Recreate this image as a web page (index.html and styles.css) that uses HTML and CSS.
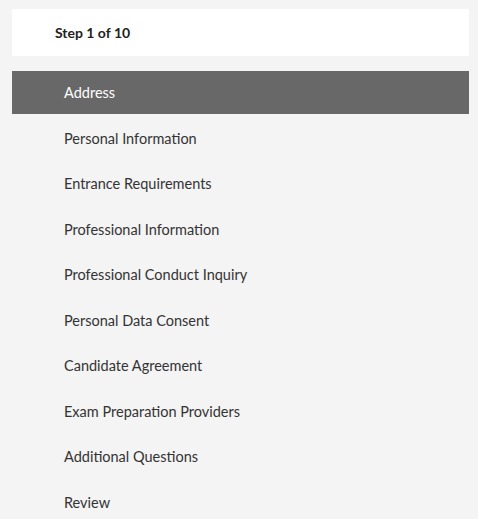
FILE: index.html
```html
<!DOCTYPE html>
<html lang="en">

<head>
    <meta charset="UTF-8">
    <meta name="viewport" content="width=device-width, initial-scale=1.0">
    <title>Application Steps</title>
    <link rel="stylesheet" href="styles.css">
</head>

<body>
    <div class="step-box">
        <span class="step-count">Step 1 of 10</span>
    </div>
    <ul class="step-list">
        <li class="step-item active">Address</li>
        <li class="step-item">Personal Information</li>
        <li class="step-item">Entrance Requirements</li>
        <li class="step-item">Professional Information</li>
        <li class="step-item">Professional Conduct Inquiry</li>
        <li class="step-item">Personal Data Consent</li>
        <li class="step-item">Candidate Agreement</li>
        <li class="step-item">Exam Preparation Providers</li>
        <li class="step-item">Additional Questions</li>
        <li class="step-item">Review</li>
    </ul>
</body>

</html>
```

FILE: styles.css
```css
* {
    padding: 0;
    margin: 0;
    box-sizing: border-box;
}

body {
    background-color: #f4f4f4;
    font-family: Lato, "Liberation Sans", sans-serif;
    color: #2b2b2b;
    padding: 9px 9px 0 12px;
}

.step-box {
    background-color: #ffffff;
    height: 47px;
    padding-left: 43px;
    display: flex;
    align-items: center;
}

.step-count {
    font-size: 14px;
    font-weight: bold;
    color: #222222;
}

.step-list {
    list-style: none;
    margin-top: 15px;
    display: flex;
    flex-direction: column;
    gap: 2.5px;
}

.step-item {
    height: 43px;
    padding-left: 52px;
    display: flex;
    align-items: center;
    font-size: 14.5px;
    color: #333333;
}

.step-item.active {
    background-color: #686868;
    color: #ffffff;
}
```
